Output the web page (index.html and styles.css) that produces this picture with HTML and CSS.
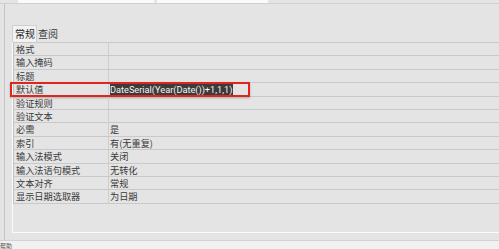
FILE: index.html
```html
<!doctype html>
<html>
  <head>
    <meta charset="utf-8">
    <title>字段属性</title>
    <link rel="stylesheet" href="styles.css">
  </head>
  <body>
    <div class="top">
      <div class="top-box first"></div>
      <div class="top-box second"></div>
    </div>
    <div class="main">
      <div class="tabs">
        <span class="tab active">常规</span>
        <span class="tab">查阅</span>
      </div>
      <div class="panel">
        <div class="row"><span class="label">格式</span><span class="value"></span></div>
        <div class="row"><span class="label">输入掩码</span><span class="value"></span></div>
        <div class="row"><span class="label">标题</span><span class="value"></span></div>
        <div class="row selected"><span class="label">默认值</span><span class="value"><span class="sel">DateSerial(Year(Date())+1,1,1)</span></span></div>
        <div class="row"><span class="label">验证规则</span><span class="value"></span></div>
        <div class="row"><span class="label">验证文本</span><span class="value"></span></div>
        <div class="row"><span class="label">必需</span><span class="value">是</span></div>
        <div class="row"><span class="label">索引</span><span class="value">有(无重复)</span></div>
        <div class="row"><span class="label">输入法模式</span><span class="value">关闭</span></div>
        <div class="row"><span class="label">输入法语句模式</span><span class="value">无转化</span></div>
        <div class="row"><span class="label">文本对齐</span><span class="value">常规</span></div>
        <div class="row"><span class="label">显示日期选取器</span><span class="value">为日期</span></div>
      </div>
    </div>
    <div class="status">帮助</div>
  </body>
</html>
```

FILE: styles.css
```css
html, body {
  margin: 0;
  padding: 0;
}
body {
  background: #e4e4e4;
  color: #3a3a3a;
  font: 9.2px/1 "Noto Sans CJK SC", "Noto Sans", sans-serif;
  height: 249px;
  overflow: hidden;
  width: 499px;
}
.top {
  border-bottom: 1px solid #d0d0d0;
  display: flex;
  height: 3px;
}
  .top-box {
    background: #fafafa;
    height: 3px;
  }
  .top-box.first {
    margin-left: 18px;
    width: 136px;
  }
  .top-box.second {
    margin-left: 3px;
    width: 111px;
  }
.main {
  border-left: 1px solid #c4c4c4;
  box-sizing: border-box;
  height: 236px;
  margin-left: 4px;
  padding-left: 7px;
  padding-top: 21px;
}
.tabs {
  display: flex;
  font-size: 10px;
  height: 17px;
}
  .tab {
    box-sizing: border-box;
    height: 17px;
    line-height: 17px;
    padding: 0 1px;
    white-space: nowrap;
  }
  .tab.active {
    background: #f2f2f2;
    border: 1px solid #cfcfcf;
    border-bottom: none;
    color: #222;
    line-height: 16px;
    padding: 0 1px 0 2px;
  }
.panel {
  border-bottom: 1px solid #fbfbfb;
  border-left: 1px solid #fbfbfb;
  height: 190px;
}
.row {
  border-bottom: 1px solid #c9c9c9;
  border-left: 1px solid #c2c2c2;
  box-sizing: border-box;
  display: flex;
  height: 13.42px;
  line-height: 12.4px;
  position: relative;
}
.row:first-child {
  border-top: 1px solid #c9c9c9;
  height: 14.42px;
}
  .label {
    border-right: 1px solid #cfcfcf;
    box-sizing: border-box;
    padding-left: 2px;
    white-space: nowrap;
    width: 95px;
  }
  .value {
    flex: 1;
    padding-left: 1px;
    white-space: nowrap;
  }
  .sel {
    background: #3b3b3b;
    color: #f4f4f4;
    display: inline-block;
    font-family: Roboto, sans-serif;
    font-size: 9.2px;
    padding-right: 1px;
  }
.row.selected::after {
  border: 2px solid #e0251f;
  box-shadow: 0 1px 2px rgba(0, 0, 0, 0.25);
  box-sizing: border-box;
  content: "";
  height: 15px;
  left: -4px;
  position: absolute;
  top: -1px;
  width: 240px;
}
.status {
  background: #f1f1f0;
  border-top: 1px solid #d2d2d2;
  color: #555;
  font-size: 6px;
  height: 9px;
  line-height: 9px;
}
```
